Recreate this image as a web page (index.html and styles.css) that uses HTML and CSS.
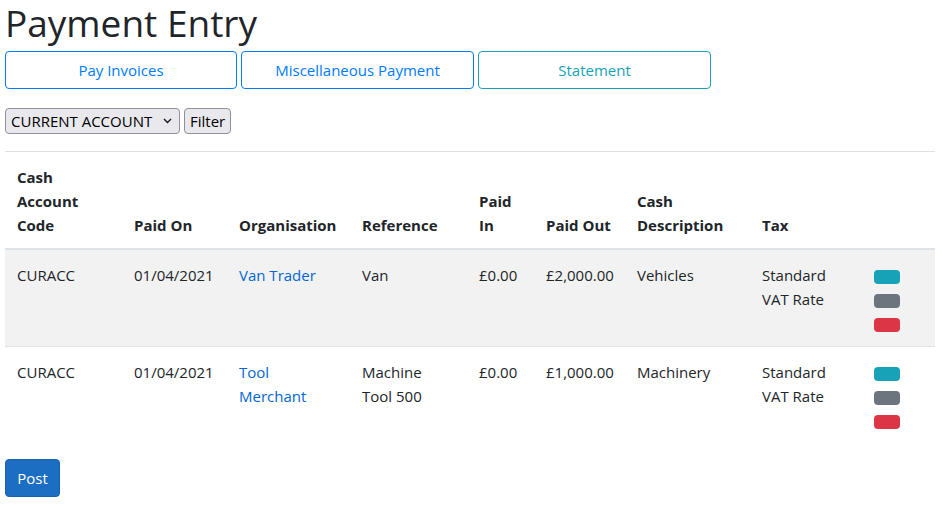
FILE: index.html
```html
<!DOCTYPE html>
<html lang="en">
<head>
<meta charset="utf-8">
<title>Payment Entry</title>
<link rel="stylesheet" href="styles.css">
</head>
<body>
<main class="page">
  <h1 class="title">Payment Entry</h1>
  <div class="tabs">
    <button class="tab tab-primary">Pay Invoices</button>
    <button class="tab tab-primary">Miscellaneous Payment</button>
    <button class="tab tab-info">Statement</button>
  </div>
  <div class="filter-bar">
    <div class="select-wrap">
      <select class="account-select">
        <option>CURRENT ACCOUNT</option>
      </select>
      <svg class="chevron" width="9" height="6" viewBox="0 0 9 6" aria-hidden="true">
        <path d="M1 1 L4.5 4.5 L8 1" fill="none" stroke="#1a1a1a" stroke-width="1.4"/>
      </svg>
    </div>
    <button class="filter-btn">Filter</button>
  </div>
  <table class="grid">
    <colgroup>
      <col class="c1"><col class="c2"><col class="c3"><col class="c4"><col class="c5"><col class="c6"><col class="c7"><col class="c8"><col class="c9">
    </colgroup>
    <thead>
      <tr>
        <th>Cash Account Code</th>
        <th>Paid On</th>
        <th>Organisation</th>
        <th>Reference</th>
        <th>Paid In</th>
        <th>Paid Out</th>
        <th>Cash Description</th>
        <th>Tax</th>
        <th></th>
      </tr>
    </thead>
    <tbody>
      <tr class="striped">
        <td>CURACC</td>
        <td>01/04/2021</td>
        <td><a href="#" class="link">Van Trader</a></td>
        <td>Van</td>
        <td>£0.00</td>
        <td>£2,000.00</td>
        <td>Vehicles</td>
        <td>Standard VAT Rate</td>
        <td>
          <div class="actions">
            <button class="act act-info"></button>
            <button class="act act-secondary"></button>
            <button class="act act-danger"></button>
          </div>
        </td>
      </tr>
      <tr>
        <td>CURACC</td>
        <td>01/04/2021</td>
        <td><a href="#" class="link">Tool Merchant</a></td>
        <td>Machine Tool 500</td>
        <td>£0.00</td>
        <td>£1,000.00</td>
        <td>Machinery</td>
        <td>Standard VAT Rate</td>
        <td>
          <div class="actions">
            <button class="act act-info"></button>
            <button class="act act-secondary"></button>
            <button class="act act-danger"></button>
          </div>
        </td>
      </tr>
    </tbody>
  </table>
  <button class="post-btn">Post</button>
</main>
</body>
</html>
```

FILE: styles.css
```css
* { box-sizing: border-box; }

html, body {
  margin: 0;
  padding: 0;
  background: #ffffff;
}

body {
  font-family: "Open Sans", "Noto Sans", sans-serif;
  font-size: 15px;
  line-height: 24px;
  color: #212529;
}

.page {
  padding: 0 5px;
}

.title {
  margin: 0;
  font-size: 37px;
  font-weight: 400;
  line-height: 46px;
  color: #212529;
}

.tabs {
  display: flex;
  gap: 4px;
  margin-top: 5px;
}

.tab {
  flex: 0 0 233px;
  height: 38px;
  background: #ffffff;
  border: 1px solid #007bff;
  border-radius: 4px;
  font-family: inherit;
  font-size: 15px;
  color: #007bff;
  padding: 0;
  cursor: pointer;
}

.tab:first-child {
  flex-basis: 232px;
}

.tab-info {
  border-color: #17a2b8;
  color: #17a2b8;
}

.filter-bar {
  display: flex;
  gap: 4px;
  margin-top: 19px;
  margin-bottom: 17px;
}

.select-wrap {
  position: relative;
  width: 175px;
  height: 26px;
}

.account-select {
  -webkit-appearance: none;
  appearance: none;
  width: 175px;
  height: 26px;
  font-family: inherit;
  font-size: 15px;
  color: #000;
  background-color: #e9e9ed;
  border: 1px solid #8f8f9d;
  border-radius: 4px;
  padding: 0 20px 0 5px;
}

.chevron {
  position: absolute;
  right: 8px;
  top: 10px;
  pointer-events: none;
}

.filter-btn {
  height: 26px;
  font-family: inherit;
  font-size: 15px;
  color: #000;
  background: #e9e9ed;
  border: 1px solid #8f8f9d;
  border-radius: 4px;
  padding: 0 5px;
}

.grid {
  width: 930px;
  table-layout: fixed;
  border-collapse: collapse;
  margin-bottom: 16px;
}

.c1 { width: 117px; }
.c2 { width: 105px; }
.c3 { width: 123px; }
.c4 { width: 117px; }
.c5 { width: 67px; }
.c6 { width: 91px; }
.c7 { width: 125px; }
.c8 { width: 112px; }
.c9 { width: 73px; }

.grid th,
.grid td {
  padding: 13px 12px 11px;
  text-align: left;
  border-top: 1px solid #dee2e6;
  line-height: 24px;
}

.grid th {
  font-weight: 700;
  vertical-align: bottom;
  border-bottom: 2px solid #dee2e6;
}

.grid td {
  vertical-align: top;
}

.grid tbody tr.striped {
  background: #f2f2f2;
}

.link {
  color: #0366d6;
  text-decoration: none;
}

.actions {
  display: flex;
  flex-direction: column;
}

.act {
  display: block;
  width: 26px;
  height: 14px;
  margin: 7px 0 3px;
  padding: 0;
  border: none;
  border-radius: 4px;
}

.act-info { background: #17a2b8; }
.act-secondary { background: #6c757d; }
.act-danger { background: #dc3545; }

.post-btn {
  display: block;
  width: 55px;
  height: 38px;
  font-family: inherit;
  font-size: 15px;
  color: #ffffff;
  background: #1b6ec2;
  border: 1px solid #1861ac;
  border-radius: 4px;
  padding: 0;
}
```
